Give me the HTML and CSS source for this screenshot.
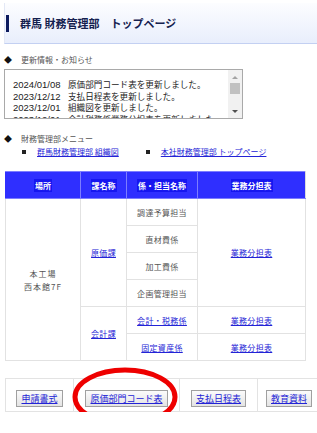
FILE: index.html
```html
<!DOCTYPE html>
<html lang="ja">
<head>
<meta charset="utf-8">
<title>群馬 財務管理部 トップページ</title>
<link rel="stylesheet" href="styles.css">
</head>
<body>
<div class="page">
  <div class="header">
    <span class="header-bar"></span>
    <h1 class="title">群馬 財務管理部　トップページ</h1>
  </div>

  <h2 class="sec"><span class="diamond">◆</span>更新情報・お知らせ</h2>
  <div class="news">
    <div class="news-lines">
      <div class="nl"><span class="date">2024/01/08</span><span>原価部門コード表を更新しました。</span></div>
      <div class="nl"><span class="date">2023/12/12</span><span>支払日程表を更新しました。</span></div>
      <div class="nl"><span class="date">2023/12/01</span><span>組織図を更新しました。</span></div>
      <div class="nl"><span class="date">2023/12/01</span><span>会計税務係業務分担表を更新しました。</span></div>
    </div>
    <div class="sbar">
      <span class="arr up"></span>
      <span class="thumb"></span>
      <span class="arr down"></span>
    </div>
  </div>

  <h2 class="sec menu-h"><span class="diamond">◆</span>財務管理部メニュー</h2>
  <div class="menu-links">
    <span class="ml"><span class="sq"></span><a href="#">群馬財務管理部 組織図</a></span>
    <span class="ml ml2"><span class="sq"></span><a href="#">本社財務管理部 トップページ</a></span>
  </div>

  <table class="org">
    <colgroup><col class="c1"><col class="c2"><col class="c3"><col class="c4"></colgroup>
    <thead>
      <tr><th><span class="hl">場所</span></th><th><span class="hl">課名称</span></th><th><span class="hl">係・担当名称</span></th><th><span class="hl">業務分担表</span></th></tr>
    </thead>
    <tbody>
      <tr>
        <td rowspan="6" class="place">本工場<br>西本館7F</td>
        <td rowspan="4"><a href="#">原価課</a></td>
        <td>調達予算担当</td>
        <td rowspan="4"><a href="#">業務分担表</a></td>
      </tr>
      <tr><td>直材費係</td></tr>
      <tr><td>加工費係</td></tr>
      <tr><td>企画管理担当</td></tr>
      <tr>
        <td rowspan="2"><a href="#">会計課</a></td>
        <td><a href="#">会計・税務係</a></td>
        <td><a href="#">業務分担表</a></td>
      </tr>
      <tr>
        <td><a href="#">固定資産係</a></td>
        <td><a href="#">業務分担表</a></td>
      </tr>
    </tbody>
  </table>

  <div class="navwrap">
    <table class="nav">
      <tr>
        <td class="n1"><span class="btn"><a href="#">申請書式</a></span></td>
        <td class="n2"><span class="btn"><a href="#">原価部門コード表</a></span></td>
        <td class="n3"><span class="btn"><a href="#">支払日程表</a></span></td>
        <td class="n4"><span class="btn"><a href="#">教育資料</a></span></td>
      </tr>
    </table>
    <svg class="circle" width="112" height="64" viewBox="0 0 112 64">
      <ellipse cx="56" cy="32" rx="50" ry="27" fill="none" stroke="#ee0000" stroke-width="5"/>
    </svg>
  </div>
</div>
</body>
</html>
```

FILE: styles.css
```css
html, body {
  margin: 0;
  padding: 0;
  background: #fff;
  overflow: hidden;
}
body {
  font-family: "Noto Sans CJK JP", "Noto Sans", sans-serif;
  color: #444;
}
.page {
  width: 317px;
  padding-top: 3px;
}
.header {
  margin-left: 4px;
  height: 40px;
  display: flex;
  align-items: center;
  border-left: 1px solid #e3e8f5;
  border-bottom: 1px solid #c3d0f2;
  background: linear-gradient(#fcfdff, #e8eefc);
}
.header-bar {
  width: 3px;
  height: 17px;
  margin-left: 1px;
  background: #0d1b5e;
}
.title {
  margin: 0 0 0 11px;
  font-size: 11px;
  font-weight: bold;
  color: #14214f;
  line-height: 14px;
  white-space: nowrap;
}
.sec {
  margin: 10px 0 0 0;
  font-size: 8px;
  font-weight: normal;
  line-height: 12px;
  color: #555;
  display: flex;
  align-items: center;
}
.diamond {
  width: 17px;
  padding-left: 4px;
  font-size: 8px;
  color: #111;
}
.news {
  margin: 3px 0 0 4px;
  width: 237px;
  height: 48px;
  border: 1px solid #a9a9a9;
  display: flex;
  overflow: hidden;
}
.news-lines {
  flex: 1;
  padding: 9px 0 0 8px;
  overflow: hidden;
}
.nl {
  display: flex;
  font-size: 8.6px;
  line-height: 11.7px;
  color: #222;
  white-space: nowrap;
}
.date {
  width: 55px;
  font-family: "Liberation Sans", Arial, sans-serif;
  font-size: 9.5px;
}
.sbar {
  width: 14px;
  background: #f1f1f1;
  display: flex;
  flex-direction: column;
  align-items: center;
}
.arr {
  width: 0;
  height: 0;
  border-left: 3px solid transparent;
  border-right: 3px solid transparent;
}
.arr.up {
  margin-top: 6px;
  border-bottom: 3px solid #a3a3a3;
}
.thumb {
  margin-top: 4px;
  width: 10px;
  height: 11px;
  background: #c1c1c1;
}
.arr.down {
  margin-top: auto;
  margin-bottom: 5px;
  border-top: 3px solid #505050;
}
.menu-h {
  margin-top: 14px;
}
.menu-links {
  margin-top: 1px;
  height: 12px;
  display: flex;
  align-items: center;
  font-size: 8px;
  line-height: 12px;
  white-space: nowrap;
}
.ml {
  display: flex;
  align-items: center;
  padding-left: 22px;
}
.ml2 {
  padding-left: 27px;
}
.sq {
  width: 4px;
  height: 4px;
  background: #222;
  margin-right: 11px;
}
a {
  color: #2323d6;
  text-decoration: underline;
}
.org {
  margin: 13px 0 0 5px;
  width: 300px;
  border-collapse: collapse;
  table-layout: fixed;
  font-size: 8px;
  border: 1px solid #dcdcdc;
}
.c1 { width: 75px; }
.c2 { width: 46px; }
.c3 { width: 71px; }
.c4 { width: 108px; }
.org th {
  height: 26px;
  padding: 0;
  background: #2f2fff;
  border: 1px solid #7d7dff;
  color: #fff;
  font-weight: bold;
  font-size: 8px;
}
.org th:first-child { border-left-color: #2f2fff; }
.org th:last-child { border-right-color: #dcdcdc; }
.org thead tr { border-top: 1px solid #dcdcdc; }
.hl {
  background: #1616f0;
  padding: 1px 1px;
}
.org td {
  height: 26px;
  padding: 0;
  text-align: center;
  border: 1px solid #e2e2e2;
  color: #555;
  letter-spacing: 0.3px;
}
.org td.place {
  line-height: 13px;
  letter-spacing: 1px;
}
.navwrap {
  margin-top: 17px;
  position: relative;
}
.nav {
  margin-left: 5px;
  width: 312px;
  border-collapse: collapse;
  table-layout: fixed;
}
.nav td {
  height: 32px;
  padding: 0;
  border: 1px solid #e3e3e3;
  text-align: center;
  vertical-align: middle;
}
.n1 { width: 67px; }
.n2 { width: 105px; }
.n3 { width: 77px; }
.nav td.n4 {
  text-align: left;
  padding-left: 8px;
  border-right: none;
}
.btn {
  display: inline-block;
  border: 1px solid #a0a0a0;
  background: linear-gradient(#fbfbfb, #e4e4e4);
  padding: 0 4px;
  height: 15px;
  line-height: 15px;
  font-size: 9px;
  white-space: nowrap;
}
.circle {
  position: absolute;
  left: 69px;
  top: -13px;
}
```
